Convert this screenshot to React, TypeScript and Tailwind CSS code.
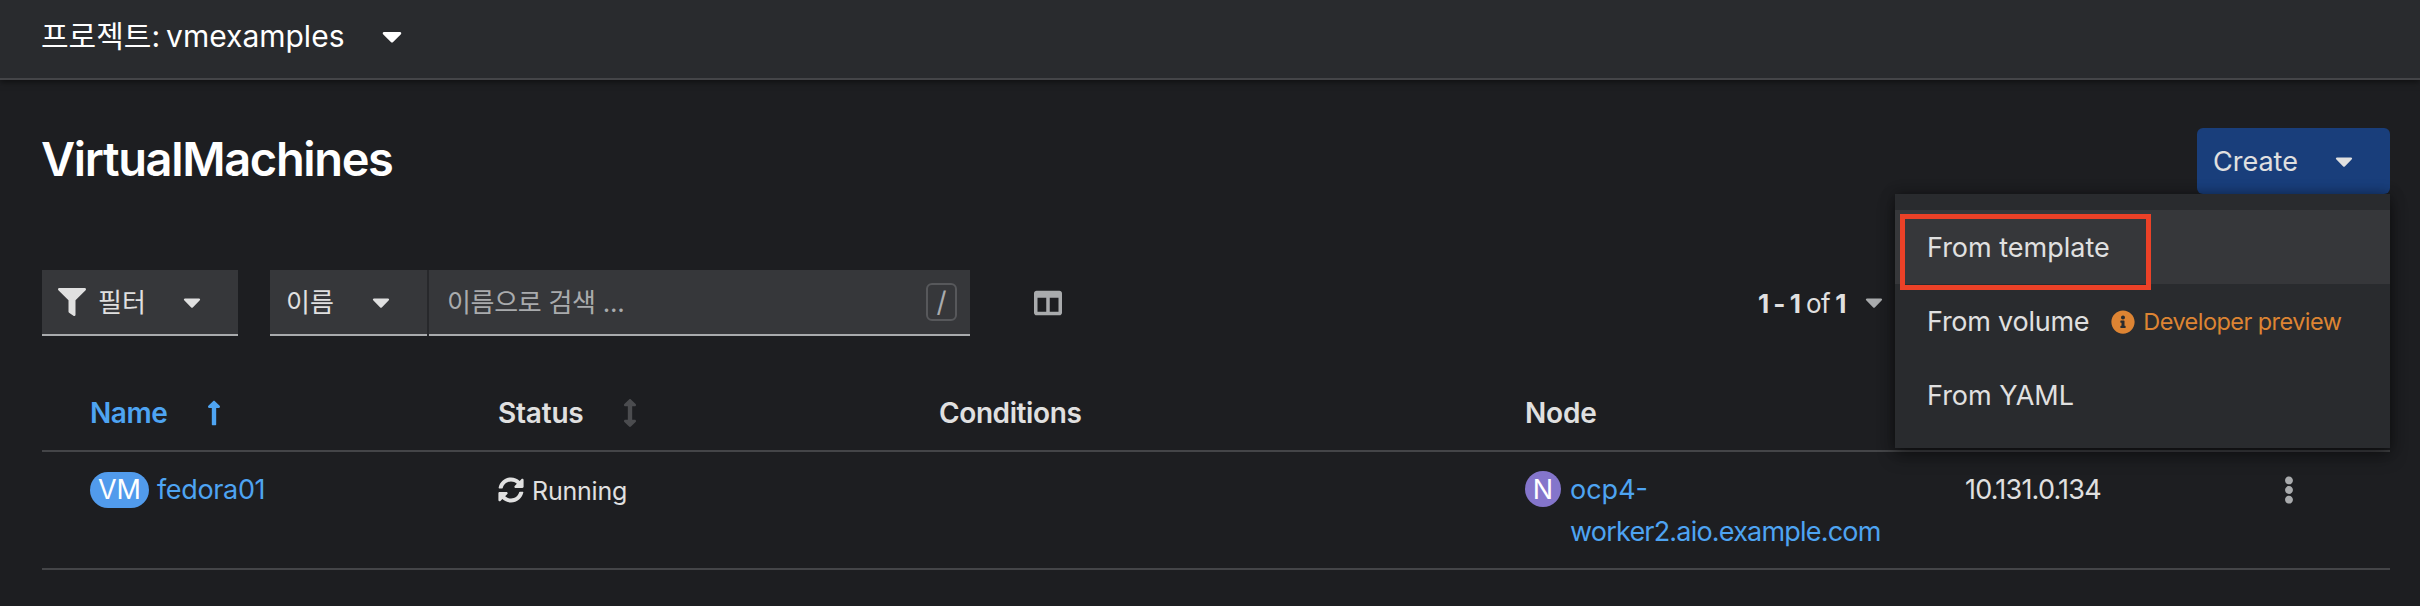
import type { ReactNode } from "react";
import {
  FaArrowsAltV,
  FaCaretDown,
  FaColumns,
  FaEllipsisV,
  FaFilter,
  FaInfoCircle,
  FaLongArrowAltUp,
  FaSyncAlt,
} from "react-icons/fa";

const GRID = "grid grid-cols-[408px_440px_587px_440px_1fr] pl-12";

function ProjectBar() {
  return (
    <header className="relative flex h-20 items-center border-b-2 border-[#444548] bg-[#292b2e] pb-1.5 pl-[41px] text-white shadow-[0_2px_6px_rgba(0,0,0,0.5)]">
      <button className="flex items-center text-[30px] leading-none">
        <span>프로젝트:</span>
        <span className="ml-[6px]">vmexamples</span>
        <FaCaretDown className="ml-[32px] size-8" />
      </button>
    </header>
  );
}

function MenuItem({ children, active = false }: { children: ReactNode; active?: boolean }) {
  return (
    <li className={`flex h-[74px] items-center pt-[2px] pl-8 ${active ? "bg-[#36373a]" : ""}`}>{children}</li>
  );
}

function CreateMenu() {
  return (
    <div className="relative">
      <button className="flex h-[66px] w-[193px] items-center rounded-md bg-[#193e7b] pt-0.5 pl-4 text-[27px] text-[#e0e0e0]">
        Create
        <FaCaretDown className="mb-0.5 ml-8 size-7" />
      </button>
      <ul className="absolute top-[66px] right-0 z-10 w-[495px] bg-[#292b2e] py-4 text-[27px] text-[#e0e0e0] shadow-[0_8px_16px_rgba(0,0,0,0.4),0_0_12px_rgba(0,0,0,0.35)]">
        <MenuItem active>From template</MenuItem>
        <MenuItem>
          <span className="tracking-[-0.25px]">From volume</span>
          <span className="ml-[22px] flex items-center gap-2 text-[23.5px] tracking-[-0.55px] text-[#dd8433]">
            <FaInfoCircle className="size-6" />
            Developer preview
          </span>
        </MenuItem>
        <MenuItem>From YAML</MenuItem>
        <li className="absolute top-5 left-[5px] h-[76px] w-[251px] border-[5px] border-[#ec4127]" />
      </ul>
    </div>
  );
}

function Toolbar() {
  return (
    <div className="mt-[76px] flex h-[66px] items-stretch text-[26px] text-[#e0e0e0]">
      <button className="flex w-[196px] items-center border-b-2 border-[#a9abad] bg-[#36373a] pl-4">
        <FaFilter className="size-7" />
        <span className="ml-3 pt-0.5 leading-none">필터</span>
        <FaCaretDown className="ml-8 size-7" />
      </button>
      <div className="ml-8 flex gap-0.5 bg-[#27282b]">
        <button className="flex w-[157px] items-center border-b-2 border-[#a9abad] bg-[#36373a] pl-4">
          <span className="pt-0.5 leading-none">이름</span>
          <FaCaretDown className="ml-[33px] size-7" />
        </button>
        <div className="flex w-[541px] items-center justify-between border-b-2 border-[#a9abad] bg-[#36373a] pr-[13px] pl-[18px] text-[#a9abad]">
          <span className="pt-0.5 leading-none tracking-[-0.3px]">이름으로 검색 ...</span>
          <kbd className="flex h-[38px] w-[31px] items-center justify-center rounded-md border-2 border-[#57585b] font-['Inter',sans-serif] text-[28px] leading-none">
            /
          </kbd>
        </div>
      </div>
      <button className="ml-16 text-[#a9abad]">
        <FaColumns className="size-7" />
      </button>
      <div className="ml-[696px] flex items-center text-[26px]">
        <b className="font-bold tracking-[-1px]">1 - 1</b>
        <span className="ml-[6px] tracking-[-0.5px]">of</span>
        <b className="ml-[5px] font-bold">1</b>
        <FaCaretDown className="mb-0.5 ml-[14px] size-7 text-[#a9abad]" />
      </div>
    </div>
  );
}

function MachineTable() {
  return (
    <section className="mt-[37px] text-[#e0e0e0]">
      <div className={`${GRID} h-[79px] items-center border-b-2 border-[#444548] pt-0.5 text-[28px] font-semibold`}>
        <div className="flex items-center tracking-[-0.4px] text-[#4ea4f2]">
          Name
          <FaLongArrowAltUp className="ml-[32px] size-7" />
        </div>
        <div className="flex items-center tracking-[-0.2px]">
          Status
          <FaArrowsAltV className="ml-[32px] size-7 text-[#4b4c4f]" />
        </div>
        <div className="pl-px tracking-[-0.4px]">Conditions</div>
        <div className="tracking-[-0.2px]">Node</div>
      </div>
      <div className={`${GRID} h-[118px] items-start border-b-2 border-[#444548] pt-4 text-[27px] leading-[42px]`}>
        <div className="flex items-center">
          <span className="flex h-9 w-[59px] items-center justify-center rounded-full bg-[#519bec] pt-px text-white">VM</span>
          <a className="ml-2 pt-px tracking-[-0.35px] text-[#4ea4f2]">fedora01</a>
        </div>
        <div className="flex items-center text-[25px]">
          <FaSyncAlt className="size-[26px]" />
          <span className="ml-2 pt-0.5 tracking-[-0.2px]">Running</span>
        </div>
        <div />
        <div className="flex">
          <span className="mt-[3px] flex size-9 items-center justify-center rounded-full bg-[#8475cb] pt-px text-white">N</span>
          <a className="ml-[9px] pt-px text-[#4ea4f2]">
            ocp4-
            <br />
            <span className="tracking-[-0.8px]">worker2.aio.example.com</span>
          </a>
        </div>
        <div className="flex items-center">
          <span className="w-[310px] pt-px tracking-[-0.8px]">10.131.0.134</span>
          <FaEllipsisV className="size-7 text-[#a9abad]" />
        </div>
      </div>
    </section>
  );
}

export default function App() {
  return (
    <div className="h-[606px] overflow-hidden bg-[#1d1e21] font-['Inter','Noto_Sans_CJK_KR',sans-serif]">
      <ProjectBar />
      <main className="pr-[30px] pl-[42px]">
        <div className="flex items-start justify-between pt-12">
          <h1 className="-mt-1 -ml-px h-[66px] text-[47px] leading-[70px] font-semibold tracking-[-1.35px] text-white">
            VirtualMachines
          </h1>
          <CreateMenu />
        </div>
        <Toolbar />
        <MachineTable />
      </main>
    </div>
  );
}
